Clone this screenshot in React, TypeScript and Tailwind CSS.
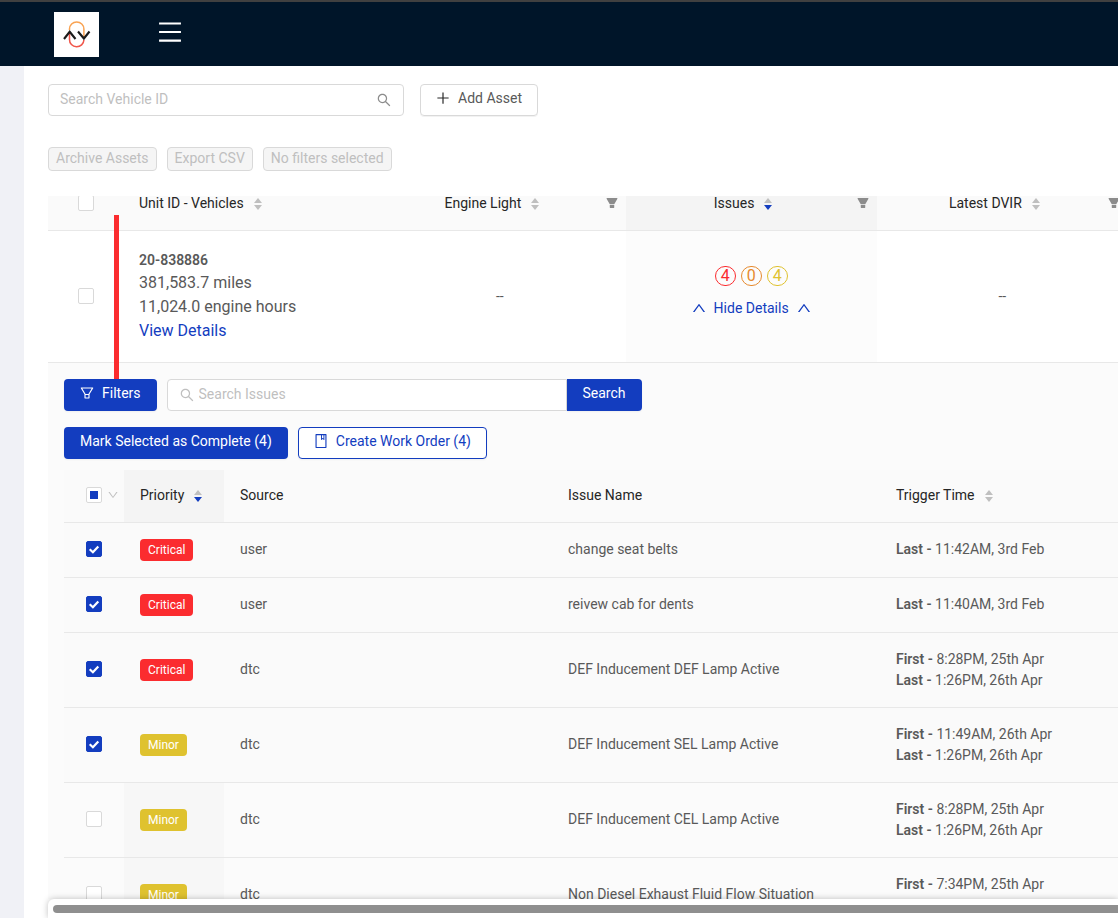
import React from "react";
import {
  AiFillFilter,
  AiOutlineBook,
  AiOutlineDown,
  AiOutlineFilter,
  AiOutlineMenu,
  AiOutlinePlus,
  AiOutlineSearch,
  AiOutlineUp,
} from "react-icons/ai";
import clsx from "clsx";

type Priority = "Critical" | "Minor";

interface Issue {
  id: number;
  priority: Priority;
  source: string;
  name: string;
  first?: string;
  last?: string;
  selected: boolean;
}

const issues: Issue[] = [
  { id: 1, priority: "Critical", source: "user", name: "change seat belts", last: "11:42AM, 3rd Feb", selected: true },
  { id: 2, priority: "Critical", source: "user", name: "reivew cab for dents", last: "11:40AM, 3rd Feb", selected: true },
  { id: 3, priority: "Critical", source: "dtc", name: "DEF Inducement DEF Lamp Active", first: "8:28PM, 25th Apr", last: "1:26PM, 26th Apr", selected: true },
  { id: 4, priority: "Minor", source: "dtc", name: "DEF Inducement SEL Lamp Active", first: "11:49AM, 26th Apr", last: "1:26PM, 26th Apr", selected: true },
  { id: 5, priority: "Minor", source: "dtc", name: "DEF Inducement CEL Lamp Active", first: "8:28PM, 25th Apr", last: "1:26PM, 26th Apr", selected: false },
  { id: 6, priority: "Minor", source: "dtc", name: "Non Diesel Exhaust Fluid Flow Situation", first: "7:34PM, 25th Apr", last: "1:26PM, 26th Apr", selected: false },
];

function Logo() {
  return (
    <svg viewBox="0 0 45 45" className="size-[45px] bg-white" fill="none" aria-label="Home">
      <path d="M15.5 18v-1a7.2 7 0 0 1 14.4 0v9" stroke="#f9a352" strokeWidth="1.5" />
      <path d="M15.5 20v7.5a7.2 7 0 0 0 14.4 .5" stroke="#f0564a" strokeWidth="1.5" />
      <path d="M10 27l5.7-7.2L21.5 27" stroke="#1b1b1b" strokeWidth="2.1" />
      <path d="M24 19.5l5.9 7L35.5 19.5" stroke="#1b1b1b" strokeWidth="2.1" />
    </svg>
  );
}

function Sorter({ active }: { active?: boolean }) {
  return (
    <svg viewBox="0 0 8 12" className="mt-0.5 h-3 w-2 shrink-0" aria-hidden="true">
      <path d="M4 0L8 5H0z" fill="#bfbfbf" />
      <path d="M4 12L0 7H8z" fill={active ? "#133dbf" : "#bfbfbf"} />
    </svg>
  );
}

interface CheckboxProps {
  label: string;
  defaultChecked?: boolean;
  partial?: boolean;
}

function Checkbox({ label, defaultChecked, partial }: CheckboxProps) {
  return (
    <label className="grid size-4 shrink-0 place-items-center">
      <input
        type="checkbox"
        aria-label={label}
        defaultChecked={defaultChecked}
        className="peer col-start-1 row-start-1 size-4 appearance-none rounded-xs border border-[#d9d9d9] bg-white checked:border-[#133dbf] checked:bg-[#133dbf]"
      />
      {partial ? (
        <span className="col-start-1 row-start-1 size-2 bg-[#133dbf]" />
      ) : (
        <svg
          viewBox="0 0 16 16"
          fill="none"
          className="pointer-events-none invisible col-start-1 row-start-1 size-4 peer-checked:visible"
        >
          <path d="M3.7 8.3L6.9 11.3L12.3 5.4" stroke="#fff" strokeWidth="2.2" />
        </svg>
      )}
    </label>
  );
}

function CenteredHeader({ title, active }: { title: string; active?: boolean }) {
  return (
    <th className={clsx("pr-2 pl-4 font-normal", active ? "bg-[#f4f4f4]" : "bg-[#fafafa]")}>
      <div className="flex items-center gap-3">
        <span className="flex flex-1 items-center justify-center gap-2.5">
          {title}
          <Sorter active={active} />
        </span>
        <button type="button" aria-label={`Filter ${title}`} className="text-[#8c8c8c]">
          <AiFillFilter size={14} className="-m-px" />
        </button>
      </div>
    </th>
  );
}

const badgeColors = [
  "border-[#fb2c2f] text-[#fb2c2f]",
  "border-[#e68a2e] text-[#e68a2e]",
  "border-[#dfc22f] text-[#dfc22f]",
];

function IssueCounts({ counts }: { counts: number[] }) {
  return (
    <div className="flex gap-[5px]">
      {counts.map((count, i) => (
        <span
          key={i}
          className={clsx(
            "flex h-5 w-[21px] items-center justify-center rounded-full border text-base leading-none",
            badgeColors[i]
          )}
        >
          {count}
        </span>
      ))}
    </div>
  );
}

function PriorityTag({ priority }: { priority: Priority }) {
  return (
    <span
      className={clsx(
        "block w-fit rounded-sm px-2 text-xs leading-[22px] text-white",
        priority === "Critical" ? "bg-[#fb2c2f]" : "bg-[#dfc22f]"
      )}
    >
      {priority}
    </span>
  );
}

function IssueRow({ issue }: { issue: Issue }) {
  return (
    <tr
      className={clsx(
        "border-b border-[#e8e8e8]",
        issue.first ? "h-[75px]" : "h-[55px]",
        issue.selected && "bg-[#fafafa]"
      )}
    >
      <td className="pb-0.5 pl-[22px]">
        <Checkbox label={`Select ${issue.name}`} defaultChecked={issue.selected} />
      </td>
      <td className={clsx("px-4", !issue.selected && "bg-[#f7f7f7]")}>
        <PriorityTag priority={issue.priority} />
      </td>
      <td className="px-4 pb-0.5">{issue.source}</td>
      <td className="px-4 pb-0.5">{issue.name}</td>
      <td className={clsx("px-4 leading-[21px]", !issue.first && "pb-0.5")}>
        {issue.first && (
          <div>
            <b className="font-semibold">First -</b> {issue.first}
          </div>
        )}
        <div>
          <b className="font-semibold">Last -</b> {issue.last}
        </div>
      </td>
    </tr>
  );
}

function IssuesPanel() {
  return (
    <div className="bg-[#fbfbfb] pt-4 pl-4">
      <div className="flex gap-2.5">
        <button
          type="button"
          className="flex h-8 items-center gap-2 rounded-sm bg-[#133dbf] px-4 pb-1 text-white shadow-xs"
        >
          <AiOutlineFilter size={16} className="-m-px" />
          Filters
        </button>
        <form className="flex w-[475px]" onSubmit={(e) => e.preventDefault()}>
          <label className="flex h-8 flex-1 items-center gap-1 rounded-l-sm border border-[#d9d9d9] bg-white px-[11px]">
            <AiOutlineSearch size={16} className="shrink-0 text-[#bfbfbf]" />
            <input
              type="search"
              placeholder="Search Issues"
              aria-label="Search Issues"
              className="w-full bg-transparent pb-0.5 outline-none placeholder:text-[#bfbfbf]"
            />
          </label>
          <button type="submit" className="h-8 rounded-r-sm bg-[#133dbf] px-4 pb-1 text-white shadow-xs">
            Search
          </button>
        </form>
      </div>

      <div className="mt-4 flex gap-2.5">
        <button type="button" className="h-8 rounded-sm bg-[#133dbf] px-4 pb-1 text-white shadow-xs">
          Mark Selected as Complete (4)
        </button>
        <button
          type="button"
          className="flex h-8 items-center gap-2 rounded-sm border border-[#133dbf] bg-white px-[15px] pb-1 text-[#133dbf] shadow-xs"
        >
          <AiOutlineBook size={16} className="-m-px" />
          Create Work Order (4)
        </button>
      </div>

      <table className="mt-[11px] w-full min-w-[1144px] table-fixed border-collapse text-left">
        <colgroup>
          <col className="w-[60px]" />
          <col className="w-[100px]" />
          <col />
          <col />
          <col />
        </colgroup>
        <thead>
          <tr className="h-[53px] border-b border-[#e8e8e8] bg-[#fafafa] text-[#262626]">
            <th className="pb-0.5 pl-[22px] font-normal">
              <div className="flex items-center gap-1.5">
                <Checkbox label="Select all issues" partial />
                <button type="button" aria-label="Selection options" className="text-[#bfbfbf]">
                  <AiOutlineDown size={12} className="-m-px" />
                </button>
              </div>
            </th>
            <th className="bg-[#f4f4f4] px-4 pb-0.5 font-normal">
              <div className="flex items-center gap-2.5">
                Priority
                <Sorter active />
              </div>
            </th>
            <th className="px-4 pb-0.5 font-normal">Source</th>
            <th className="px-4 pb-0.5 font-normal">Issue Name</th>
            <th className="px-4 pb-0.5 font-normal">
              <div className="flex items-center gap-2.5">
                Trigger Time
                <Sorter />
              </div>
            </th>
          </tr>
        </thead>
        <tbody>
          {issues.map((issue) => (
            <IssueRow key={issue.id} issue={issue} />
          ))}
        </tbody>
      </table>
    </div>
  );
}

function VehiclesTable() {
  return (
    <table className="-mt-5 w-full min-w-[1080px] table-fixed border-collapse text-left">
      <colgroup>
        <col className="w-[75px]" />
        <col />
        <col />
        <col />
        <col />
      </colgroup>
      <thead>
        <tr className="h-[54px] border-b border-[#e8e8e8] text-[#262626]">
          <th className="bg-[#fafafa] pl-[30px] font-normal">
            <Checkbox label="Select all vehicles" />
          </th>
          <th className="bg-[#fafafa] px-4 font-normal">
            <div className="flex items-center gap-2.5">
              Unit ID - Vehicles
              <Sorter />
            </div>
          </th>
          <CenteredHeader title="Engine Light" />
          <CenteredHeader title="Issues" active />
          <CenteredHeader title="Latest DVIR" />
        </tr>
      </thead>
      <tbody>
        <tr className="h-[132px] border-b border-[#e8e8e8]">
          <td className="pl-[30px]">
            <Checkbox label="Select vehicle 20-838886" />
          </td>
          <td className="px-4 text-base">
            <div className="text-sm leading-[22px] font-semibold">20-838886</div>
            <div>381,583.7 miles</div>
            <div>11,024.0 engine hours</div>
            <a href="#details" className="block text-[#133dbf]">
              View Details
            </a>
          </td>
          <td className="text-center">--</td>
          <td className="bg-[#fcfcfc]">
            <div className="flex flex-col items-center gap-[11px] pb-2">
              <IssueCounts counts={[4, 0, 4]} />
              <button type="button" className="flex items-center gap-2 text-[#133dbf]">
                <AiOutlineUp size={16} className="-m-px" />
                Hide Details
                <AiOutlineUp size={16} className="-m-px" />
              </button>
            </div>
          </td>
          <td className="text-center">--</td>
        </tr>
        <tr>
          <td colSpan={5} className="p-0">
            <IssuesPanel />
          </td>
        </tr>
      </tbody>
    </table>
  );
}

const bulkActions = ["Archive Assets", "Export CSV", "No filters selected"];

export default function App() {
  return (
    <div className="flex h-screen flex-col overflow-hidden bg-[#f0f1f6] font-['Roboto',sans-serif] text-sm leading-[22px] text-[#595959]">
      <header className="flex h-[66px] shrink-0 items-center gap-[57px] border-t-2 border-[#404040] bg-[#001529] pl-[54px]">
        <Logo />
        <button type="button" aria-label="Toggle menu" className="pb-1 text-white">
          <AiOutlineMenu size={28} />
        </button>
      </header>

      <main className="ml-6 flex min-h-0 flex-1 flex-col bg-white pt-[18px] pl-6">
        <div className="flex gap-4">
          <label className="flex h-8 w-[356px] items-center rounded-sm border border-[#d9d9d9] px-[11px]">
            <input
              type="search"
              placeholder="Search Vehicle ID"
              aria-label="Search Vehicle ID"
              className="w-full pb-0.5 outline-none placeholder:text-[#bfbfbf]"
            />
            <AiOutlineSearch size={16} className="shrink-0 text-[#8c8c8c]" />
          </label>
          <button
            type="button"
            className="flex h-8 items-center gap-2 rounded-sm border border-[#d9d9d9] px-[15px] pb-1 shadow-2xs"
          >
            <AiOutlinePlus size={16} className="-m-px text-[#262626]" />
            Add Asset
          </button>
        </div>

        <div className="mt-[31px] flex gap-2.5">
          {bulkActions.map((action) => (
            <button
              key={action}
              type="button"
              disabled
              className="h-6 rounded-sm border border-[#d9d9d9] bg-[#f5f5f5] px-[7px] pb-0.5 leading-5 text-[#bfbfbf]"
            >
              {action}
            </button>
          ))}
        </div>

        <div className="relative mt-[25px] min-h-0 flex-1 overflow-hidden">
          <VehiclesTable />
          {/* marker pointing down at the Filters button */}
          <div className="absolute top-[19px] left-[66px] h-[164px] w-[5px] bg-[#fb2c2f]" />
        </div>

        {/* sticky horizontal scrollbar */}
        <div className="z-10 h-[19px] shrink-0 rounded-tl-md bg-white pt-1.5 pl-[5px] shadow-[0_0_6px_rgba(0,0,0,0.25)]">
          <div className="h-2 rounded-l-full bg-[#8f8f8f]" />
        </div>
      </main>
    </div>
  );
}
